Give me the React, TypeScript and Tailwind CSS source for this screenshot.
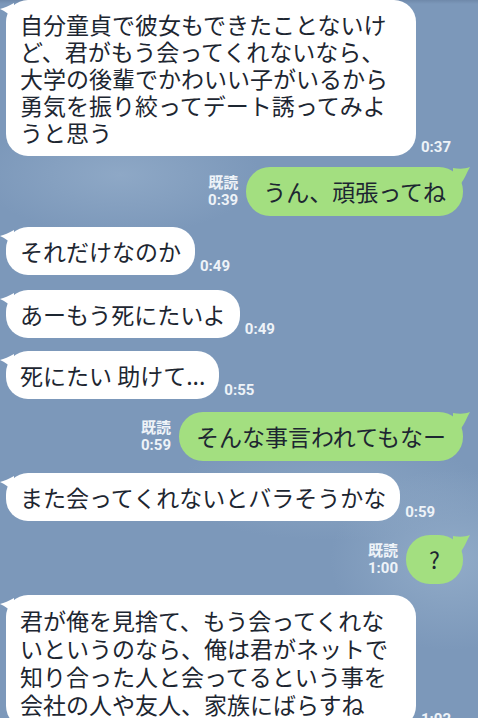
const jp = { fontFamily: '"Noto Sans CJK JP", sans-serif' };
const meta = { fontFamily: 'Roboto, "Noto Sans CJK JP", sans-serif' };

const LeftTail = () => (
  <svg className="absolute -left-[6px] top-[3px]" width="14" height="16" viewBox="0 0 14 16">
    <path d="M14 0 C 9 3, 4 5, 0 6 C 5 8, 9 11, 14 16 Z" fill="#ffffff" />
  </svg>
);

const RightTail = () => (
  <svg className="absolute -right-[8px] top-0" width="18" height="20" viewBox="0 0 18 20">
    <path d="M0 1 C 6 2, 12 2, 17 0 C 14 5, 12 12, 6 19 L0 19 Z" fill="#a3df80" />
  </svg>
);

const Time = ({ t }: { t: string }) => (
  <span style={meta} className="text-[15px] font-bold leading-none text-[#eef3f8] mb-[1px]">
    {t}
  </span>
);

const Theirs = ({ lines, time, mt, w, leading = "leading-[27px]" }: { lines: string[]; time: string; mt: string; w?: string; leading?: string }) => (
  <div className={`flex items-end gap-[5px] pl-[6px] ${mt}`}>
    <div
      style={jp}
      className={`relative bg-white rounded-[22px] px-[14px] py-[10.5px] text-[23px] ${leading} text-[#1d2631] whitespace-nowrap ${w ?? ""}`}
    >
      <LeftTail />
      {lines.map((l) => (
        <div key={l}>{l}</div>
      ))}
    </div>
    <Time t={time} />
  </div>
);

const Mine = ({ text, time, mt, w = "px-[17px]" }: { text: string; time: string; mt: string; w?: string }) => (
  <div className={`flex items-center justify-end gap-[8px] pr-[15px] ${mt}`}>
    <div style={meta} className="flex flex-col items-end text-[15px] font-bold leading-[17px] text-[#eef3f8]">
      <span>既読</span>
      <span>{time}</span>
    </div>
    <div
      style={jp}
      className={`relative bg-[#a3df80] rounded-[24px] py-[11px] text-[23px] leading-[27px] text-[#1d2631] whitespace-nowrap ${w}`}
    >
      <RightTail />
      {text}
    </div>
  </div>
);

export default function App() {
  return (
    <div className="w-[478px] h-[718px] overflow-hidden bg-[radial-gradient(ellipse_140px_60px_at_120px_175px,#8ea8c6,transparent),radial-gradient(ellipse_120px_90px_at_450px_560px,#91abc8,transparent),radial-gradient(ellipse_160px_50px_at_330px_490px,#88a3c2,transparent),linear-gradient(#6f89aa_0px,#7c98ba_4px,#7c98ba_100%)]">
      <Theirs
        mt="mt-0"
        w="w-[410px]"
        time="0:37"
        lines={[
          "自分童貞で彼女もできたことないけ",
          "ど、君がもう会ってくれないなら、",
          "大学の後輩でかわいい子がいるから",
          "勇気を振り絞ってデート誘ってみよ",
          "うと思う",
        ]}
      />
      <Mine mt="mt-[11px]" text="うん、頑張ってね" time="0:39" />
      <Theirs mt="mt-[11px]" time="0:49" lines={["それだけなのか"]} />
      <Theirs mt="mt-[15px]" time="0:49" lines={["あーもう死にたいよ"]} />
      <Theirs mt="mt-[13px]" time="0:55" lines={["死にたい 助けて..."]} />
      <Mine mt="mt-[13px]" text="そんな事言われてもなー" time="0:59" />
      <Theirs mt="mt-[12px]" time="0:59" lines={["また会ってくれないとバラそうかな"]} />
      <Mine mt="mt-[14px]" text="?" time="1:00" w="w-[57px] text-center px-0" />
      <Theirs
        mt="mt-[11px]"
        w="w-[410px]"
        leading="leading-[28px]"
        time="1:02"
        lines={[
          "君が俺を見捨て、もう会ってくれな",
          "いというのなら、俺は君がネットで",
          "知り合った人と会ってるという事を",
          "会社の人や友人、家族にばらすね",
        ]}
      />
    </div>
  );
}
